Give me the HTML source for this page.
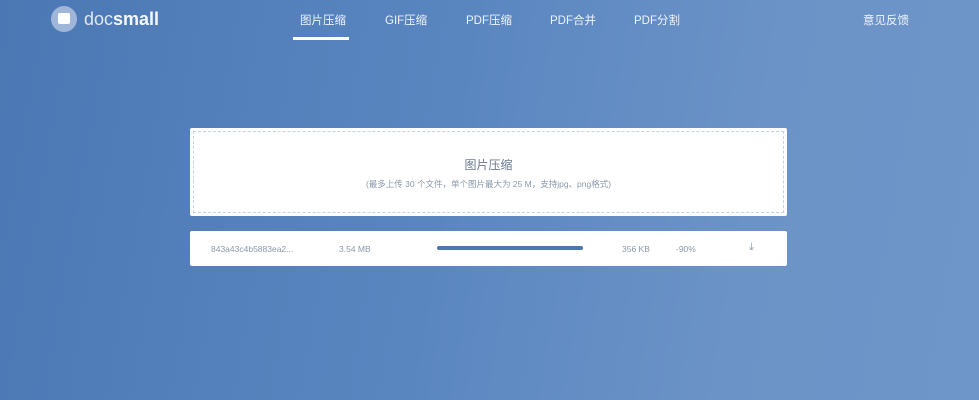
<!DOCTYPE html>
<html><head><meta charset="utf-8"><style>
*{margin:0;padding:0;box-sizing:border-box}
body{width:979px;height:400px;overflow:hidden;font-family:"Liberation Sans","Noto Sans CJK SC",sans-serif;
background:linear-gradient(100deg,#4b78b4 0%,#5a86c0 45%,#6b93c7 75%,#6e96c8 100%);position:relative}
.logo{position:absolute;left:51px;top:6px;width:26px;height:26px;border-radius:50%;background:#9fb6d8}
.logo i{position:absolute;left:7px;top:7px;width:12px;height:11px;background:#fff;border-radius:2px}
.brand{position:absolute;left:84px;top:9px;font-size:18px;color:#dfe7f3;letter-spacing:0}
.brand b{color:#f4f7fc;font-weight:bold}
.nav{position:absolute;top:12px;font-size:11.5px;color:#eef3fa}
.ul{position:absolute;left:293px;top:37px;width:56px;height:3px;background:#fff}
.card{position:absolute;left:190px;top:128px;width:597px;height:88px;background:#fff;border-radius:2px}
.card .d{position:absolute;left:3px;top:3px;right:3px;bottom:3px;border:1px dashed #c6d3e3}
.t1{position:absolute;top:28px;width:100%;text-align:center;font-size:12px;color:#6a7a90}
.t2{position:absolute;top:50px;width:100%;text-align:center;font-size:8.5px;color:#8a98aa}
.row{position:absolute;left:190px;top:231px;width:597px;height:35px;background:#fff;border-radius:2px;font-size:8.5px;color:#8a98aa}
.row span{position:absolute;top:13px}
.bar{position:absolute;left:247px;top:15px;width:146px;height:4px;border-radius:2px;background:#4c77b0}
</style></head><body>
<div class="logo"><i></i></div>
<div class="brand">doc<b>small</b></div>
<div class="nav" style="left:300px">图片压缩</div>
<div class="nav" style="left:385px">GIF压缩</div>
<div class="nav" style="left:466px">PDF压缩</div>
<div class="nav" style="left:550px">PDF合并</div>
<div class="nav" style="left:634px">PDF分割</div>
<div class="nav" style="left:863px">意见反馈</div>
<div class="ul"></div>
<div class="card"><div class="d"></div>
<div class="t1">图片压缩</div>
<div class="t2">(最多上传 30 个文件，单个图片最大为 25 M，支持jpg、png格式)</div></div>
<div class="row">
<span style="left:21px">843a43c4b5883ea2...</span>
<span style="left:149px">3.54 MB</span>
<div class="bar"></div>
<span style="left:432px">356 KB</span>
<span style="left:486px">-90%</span>
<span style="left:559px;top:10px;font-size:11px">⤓</span>
</div>
</body></html>
